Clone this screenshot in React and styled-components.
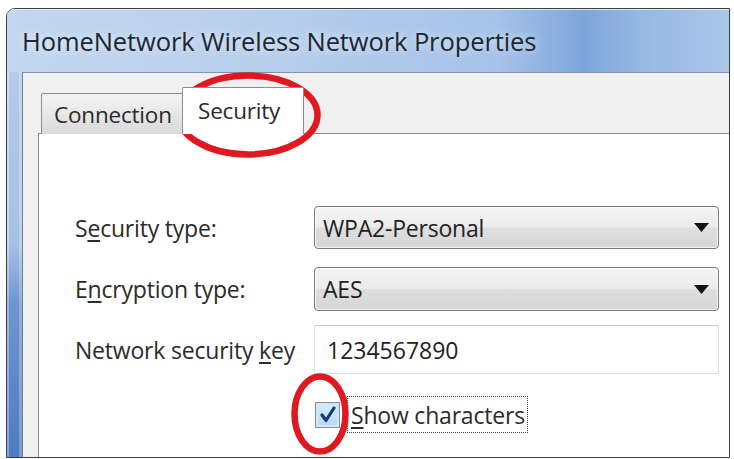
import styled, { createGlobalStyle } from 'styled-components'

const GlobalStyle = createGlobalStyle`
  html, body {
    margin: 0;
    padding: 0;
    background: #ffffff;
  }
  body {
    font-family: "Open Sans", "Noto Sans", sans-serif;
    color: #262626;
  }
`

const Page = styled.div`
  position: relative;
  width: 734px;
  height: 459px;
  padding: 8px 4px 1px 6px;
  box-sizing: border-box;
  overflow: hidden;
`

const Window = styled.div`
  display: flex;
  flex-direction: column;
  height: 100%;
  border: 1px solid #3c3f44;
  border-top-left-radius: 9px;
  overflow: hidden;
  box-sizing: border-box;
`

const TitleBar = styled.div`
  height: 63px;
  flex-shrink: 0;
  display: flex;
  align-items: center;
  padding-left: 15px;
  background: linear-gradient(
    90deg,
    #c3d7ee 0%,
    #b6cdeb 40%,
    #a5c2e8 68%,
    #7ea5da 80%,
    #98b8e3 88%,
    #aac6e8 100%
  );
  box-shadow: inset 0 1px 0 #dfeaf7;
`

const Title = styled.span`
  font-size: 25.5px;
  letter-spacing: -0.1px;
  color: #1b2733;
  text-shadow: 0 0 8px rgba(255, 255, 255, 0.8);
`

const Body = styled.div`
  flex: 1;
  display: flex;
  min-height: 0;
`

const SideFrame = styled.div`
  width: 15px;
  flex-shrink: 0;
  background: linear-gradient(
    180deg,
    #b4cbe9 0%,
    #a6c0e4 45%,
    #6f95cf 60%,
    #4d7cc2 100%
  );
  box-shadow: inset 2px 0 0 rgba(255, 255, 255, 0.35),
    inset -3px 0 0 rgba(255, 255, 255, 0.25);
`

const Inner = styled.div`
  flex: 1;
  display: flex;
  flex-direction: column;
  background: #f0f0f0;
  border-left: 1px solid #6f7f96;
  border-top: 1px solid #7f93b0;
  padding: 17px 0 0 15px;
  min-width: 0;
`

const TabStrip = styled.div`
  display: flex;
  align-items: flex-end;
  height: 44px;
  padding-left: 3px;
  margin-bottom: -1px;
  position: relative;
  z-index: 1;
`

const Tab = styled.div`
  box-sizing: border-box;
  display: flex;
  align-items: center;
  font-size: 22.5px;
  letter-spacing: -0.2px;
  color: #2a2a2a;
  border: 1px solid #898c95;
  border-bottom: none;
  border-radius: 2px 2px 0 0;
  height: ${p => (p.$active ? '47px' : '41px')};
  width: ${p => p.$width}px;
  padding-left: ${p => (p.$active ? '15px' : '12px')};
  margin-left: ${p => (p.$active ? '-2px' : '0')};
  background: ${p =>
    p.$active
      ? '#ffffff'
      : 'linear-gradient(180deg, #f3f3f3 0%, #e9e9e9 45%, #d9d9d9 100%)'};
  padding-bottom: ${p => (p.$active ? '1px' : '0')};
`

const Panel = styled.div`
  flex: 1;
  background: #ffffff;
  border-top: 1px solid #898c95;
  border-left: 1px solid #898c95;
  padding: 72px 10px 0 36px;
`

const Row = styled.div`
  display: flex;
  align-items: center;
  margin-top: ${p => p.$gap || 0}px;
`

const Label = styled.div`
  width: 239px;
  flex-shrink: 0;
  font-size: 23px;
  letter-spacing: -0.2px;
  color: #2b2b2b;
`

const Key = styled.u`
  text-decoration: underline;
  text-underline-offset: 3px;
`

const Select = styled.div`
  box-sizing: border-box;
  width: 405px;
  height: ${p => p.$h}px;
  display: flex;
  align-items: center;
  justify-content: space-between;
  padding: 0 9px 0 8px;
  border: 1px solid #7b7b7b;
  border-radius: 4px;
  background: linear-gradient(180deg, #f4f4f4 0%, #ececec 48%, #dedede 52%, #d6d6d6 100%);
  box-shadow: inset 0 0 0 1px rgba(255, 255, 255, 0.8);
  font-size: 23px;
  letter-spacing: -0.2px;
  color: #222;
`

const TextField = styled.div`
  box-sizing: border-box;
  width: 405px;
  height: 49px;
  display: flex;
  align-items: center;
  padding-left: 12px;
  border: 1px solid #dadde2;
  border-top-color: #c5c8ce;
  border-radius: 2px;
  background: #ffffff;
  font-size: 23px;
  color: #222;
`

const CheckRow = styled.div`
  display: flex;
  align-items: center;
  margin-top: 23px;
  margin-left: 240px;
  height: 35px;
`

const CheckBox = styled.div`
  box-sizing: border-box;
  width: 25px;
  height: 26px;
  border: 1px solid #8a8f96;
  background: linear-gradient(180deg, #d9edfb 0%, #b4d8f2 100%);
  box-shadow: inset 0 0 0 2px #cfe6f8;
  display: flex;
  align-items: center;
  justify-content: center;
`

const FocusLabel = styled.div`
  margin-left: 7px;
  height: 35px;
  display: flex;
  align-items: center;
  padding: 0 2px 0 3px;
  border: 1px dotted #444;
  font-size: 23px;
  letter-spacing: -0.2px;
  color: #2b2b2b;
`

const Marker = styled.svg`
  position: absolute;
  left: ${p => p.$x}px;
  top: ${p => p.$y}px;
  pointer-events: none;
`

function Arrow() {
  return (
    <svg width="15" height="9" viewBox="0 0 15 9">
      <path d="M0 0 H15 L7.5 9 Z" fill="#111" />
    </svg>
  )
}

function RedRing({ x, y, w, h }) {
  return (
    <Marker $x={x} $y={y} width={w} height={h} viewBox={`0 0 ${w} ${h}`}>
      <ellipse
        cx={w / 2}
        cy={h / 2}
        rx={w / 2 - 3.5}
        ry={h / 2 - 3.5}
        fill="none"
        stroke="#e01820"
        strokeWidth="6.5"
      />
    </Marker>
  )
}

export default function App() {
  return (
    <Page>
      <GlobalStyle />
      <Window>
        <TitleBar>
          <Title>HomeNetwork Wireless Network Properties</Title>
        </TitleBar>
        <Body>
          <SideFrame />
          <Inner>
            <TabStrip>
              <Tab $width={143}>Connection</Tab>
              <Tab $active $width={122}>Security</Tab>
            </TabStrip>
            <Panel>
              <Row>
                <Label>
                  S<Key>e</Key>curity type:
                </Label>
                <Select $h={43}>
                  <span>WPA2-Personal</span>
                  <Arrow />
                </Select>
              </Row>
              <Row $gap={18}>
                <Label>
                  E<Key>n</Key>cryption type:
                </Label>
                <Select $h={44}>
                  <span>AES</span>
                  <Arrow />
                </Select>
              </Row>
              <Row $gap={14}>
                <Label>
                  Network security <Key>k</Key>ey
                </Label>
                <TextField>1234567890</TextField>
              </Row>
              <CheckRow>
                <CheckBox>
                  <svg width="16" height="17" viewBox="0 0 16 17">
                    <path
                      d="M2 9 L6 14.5 L14 2"
                      fill="none"
                      stroke="#173685"
                      strokeWidth="3.2"
                      strokeLinecap="round"
                      strokeLinejoin="round"
                    />
                  </svg>
                </CheckBox>
                <FocusLabel>
                  <span>
                    <Key>S</Key>how characters
                  </span>
                </FocusLabel>
              </CheckRow>
            </Panel>
          </Inner>
        </Body>
      </Window>
      <RedRing x={175} y={72} w={146} h={86} />
      <RedRing x={291} y={373} w={58} h={82} />
    </Page>
  )
}
